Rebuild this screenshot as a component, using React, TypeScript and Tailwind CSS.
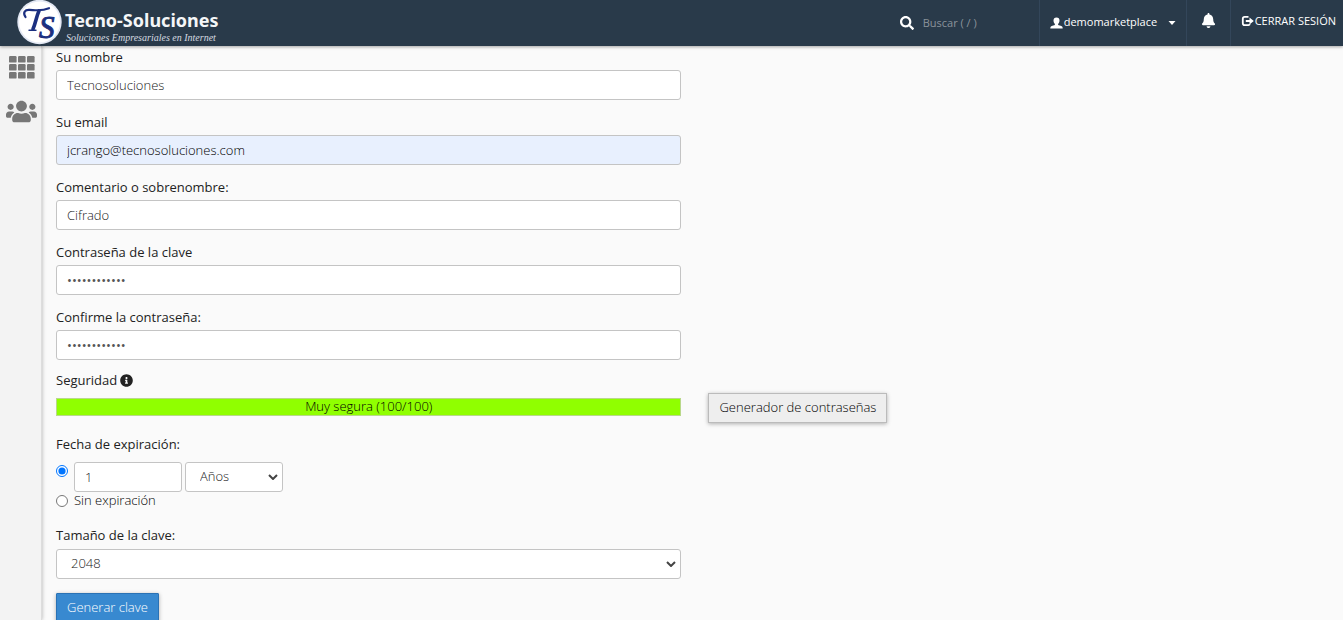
import React from "react";
import { FaBell, FaInfoCircle, FaSearch, FaUsers } from "react-icons/fa";

const control =
  "block h-[30px] w-full rounded-[3px] border border-[#c4c4c4] bg-white px-[10px] text-[13px] outline-none";

function Logo() {
  return (
    <a href="#" aria-label="Tecno-Soluciones" className="ml-[17px] flex items-center gap-[2px]">
      <svg viewBox="0 0 46 46" className="h-[46px] w-[46px] shrink-0">
        <circle cx="22.500" cy="22" r="22.200" fill="#e3e8f4" />
        <circle cx="22.500" cy="22" r="20.500" fill="#fff" />
        <text
          x="22"
          y="37.500"
          fontSize="31"
          fill="#1b2f80"
          stroke="#1b2f80"
          strokeWidth="1"
          fontFamily="'Liberation Serif', serif"
          fontStyle="italic"
        >
          S
        </text>
        <g fill="none" stroke="#1b2f80" strokeLinecap="round">
          <path d="M8.500 17C5.500 12.500 8 9.500 12.500 9.800c6.500.4 12 1.700 19.500-1.600" strokeWidth="2.200" />
          <path d="M22 11c-2.500 5-3.300 12-6 18" strokeWidth="3.600" />
          <path d="M12 30.300h7" strokeWidth="1.400" />
        </g>
      </svg>
      <span className="flex flex-col pt-2">
        <span className="font-['Noto_Sans',sans-serif] text-[18px] leading-[22px] font-bold text-[#f4f6f8]">
          Tecno-Soluciones
        </span>
        <span className="pl-px font-['Liberation_Serif',serif] text-[10px] leading-[14px] text-[#d5dae0] italic">
          Soluciones Empresariales en Internet
        </span>
      </span>
    </a>
  );
}

function Header() {
  return (
    <header className="relative z-10 flex h-[46px] items-stretch bg-[#293a4a] text-[11px] font-normal text-white shadow-[0_1px_3px_rgba(0,0,0,0.35)]">
      <Logo />
      <label className="ml-auto flex w-[139px] items-center gap-[9px]">
        <FaSearch size={14} className="shrink-0" />
        <input
          type="search"
          aria-label="Buscar"
          placeholder="Buscar ( / )"
          className="w-full min-w-0 bg-transparent outline-none placeholder:text-[#8b939b]"
        />
      </label>
      <button type="button" className="flex w-[147px] items-center border-l border-[#33465a] pl-[10px]">
        <svg viewBox="0 0 13 12" className="h-3 w-[13px]" fill="currentColor">
          <path d="M6.500 0.500C8.500 0.500 9.500 1.700 9.500 3.600c0 1.500-.6 2.700-1.400 3.400v.8c0 .6 3.300 1 4 1.700.4.400.6 1 .6 2H0.300c0-1 .2-1.600.6-2 .7-.7 4-1.100 4-1.700V7C4.100 6.300 3.500 5.100 3.500 3.600 3.500 1.700 4.500 0.500 6.500 0.500z" />
        </svg>
        <span className="ml-px pb-px">demomarketplace</span>
        <svg viewBox="0 0 8 4" className="ml-[11px] h-1 w-2" fill="currentColor">
          <path d="M0.500 0h7L4 4z" />
        </svg>
      </button>
      <button type="button" aria-label="Notificaciones" className="flex w-11 items-center justify-center border-l border-[#33465a] pb-[5px]">
        <FaBell size={15} />
      </button>
      <a href="#" className="flex items-center border-l border-[#33465a] pr-[7px] pb-1 pl-[10px] whitespace-nowrap">
        <svg viewBox="0 0 13 12" className="mr-px h-3 w-[13px]">
          <path
            d="M7.500 1.900H3.700A1.900 1.900 0 0 0 1.800 3.800v4.400a1.900 1.900 0 0 0 1.900 1.900h3.800a1.600 1.600 0 0 0 1.400-.9"
            fill="none"
            stroke="currentColor"
            strokeWidth="1.800"
          />
          <path d="M4.800 4.900h3.700V2.400L12.800 6 8.500 9.600V7.100H4.800z" fill="currentColor" />
        </svg>
        CERRAR SESIÓN
      </a>
    </header>
  );
}

function Sidebar() {
  return (
    <nav className="flex w-[42px] shrink-0 flex-col items-center gap-[17px] border-r border-[#ddd] bg-[#f3f3f3] pt-[10px] pl-[2px] text-[#777] shadow-[0_0_4px_rgba(0,0,0,0.3)]">
      <a href="#" aria-label="Aplicaciones">
        <svg viewBox="0 0 26 23" className="h-[23px] w-[26px]" fill="currentColor">
          {[0, 9, 18].map((x) =>
            [0, 8, 16].map((y) => <rect key={`${x}-${y}`} x={x} y={y} width="7.600" height="6.600" rx="1.200" />)
          )}
        </svg>
      </a>
      <a href="#" aria-label="Usuarios">
        <FaUsers size={31} />
      </a>
    </nav>
  );
}

function Field({ id, label, type = "text", value, tone = "text-[#222]" }: { id: string; label: string; type?: string; value: string; tone?: string }) {
  return (
    <div>
      <label htmlFor={id} className="mb-[5px] block leading-4 font-normal text-[#222]">
        {label}
      </label>
      <input id={id} type={type} defaultValue={value} className={`${control} ${tone}`} />
    </div>
  );
}

function Chevron() {
  return (
    <svg viewBox="0 0 10 6" className="pointer-events-none absolute top-3 right-[5px] h-[6px] w-[10px]">
      <path d="M1 1l4 4 4-4" fill="none" stroke="#444" strokeWidth="2" />
    </svg>
  );
}

export default function App() {
  return (
    <div className="flex h-screen flex-col overflow-hidden bg-[#fafafa] font-['Open_Sans',sans-serif] text-[13px] font-light text-black">
      <Header />
      <div className="flex min-h-0 flex-1">
        <Sidebar />
        <main className="flex-1 pt-[3px] pl-[14px]">
          <form className="grid grid-cols-[48.6%_1fr] gap-x-[27px]">
            <div className="col-start-1 mb-3 flex flex-col gap-[14px]">
              <Field id="nombre" label="Su nombre" value="Tecnosoluciones" />
              <Field id="email" label="Su email" type="email" value="jcrango@tecnosoluciones.com" tone="!bg-[#e8f0fe] text-black" />
              <Field id="comentario" label="Comentario o sobrenombre:" value="Cifrado" />
              <Field id="clave" label="Contraseña de la clave" type="password" value="abcdefghijkl" tone="font-normal text-[#555]" />
              <Field id="confirmar" label="Confirme la contraseña:" type="password" value="abcdefghijkl" tone="font-normal text-[#555]" />
            </div>
            <div className="col-start-1">
              <p className="mb-[10px] flex items-center gap-[3px] leading-4 font-normal text-[#222]">
                Seguridad <FaInfoCircle size={13} />
              </p>
              <div role="meter" aria-label="Seguridad" aria-valuenow={100} aria-valuemin={0} aria-valuemax={100} className="h-[18px] border border-[#b9d88a] bg-[#90ff00] text-center leading-[14px]">
                Muy segura (100/100)
              </div>
            </div>
            <div className="flex items-end">
              <button type="button" className="-mb-[7px] h-[30px] border border-[#bbb] bg-[#eee] px-[10px] shadow-[0_1px_4px_rgba(0,0,0,0.3)]">
                Generador de contraseñas
              </button>
            </div>
            <div className="col-start-1">
              <fieldset className="mt-5 mb-[19px]">
                <legend className="mb-[10px] leading-4 font-normal text-[#222]">Fecha de expiración:</legend>
                <div className="flex items-start">
                  <input type="radio" name="expira" defaultChecked aria-label="Con expiración" className="mt-[3px] mr-[6px] h-3 w-3 accent-[#0075ff]" />
                  <input type="text" aria-label="Cantidad" defaultValue="1" className="mr-[3px] h-[30px] w-[108px] rounded-[3px] border border-[#c4c4c4] bg-white px-[10px] text-[#222]" />
                  <div className="relative w-[98px]">
                    <select aria-label="Unidad" className={`${control} appearance-none !px-[14px] text-[#222]`}>
                      <option>Años</option>
                      <option>Meses</option>
                    </select>
                    <Chevron />
                  </div>
                </div>
                <label className="flex items-start gap-[6px] leading-4">
                  <input type="radio" name="expira" className="mt-[3px] h-3 w-3" />
                  Sin expiración
                </label>
              </fieldset>
              <label htmlFor="tamano" className="mb-[6px] block leading-4 font-normal text-[#222]">
                Tamaño de la clave:
              </label>
              <div className="relative mb-[14px]">
                <select id="tamano" className={`${control} appearance-none !px-[14px] text-[#222]`}>
                  <option>2048</option>
                  <option>4096</option>
                </select>
                <Chevron />
              </div>
              <button type="submit" className="h-[30px] rounded-[1px] border border-[#2a72b5] bg-[#3889d0] px-[10px] font-light text-white shadow-[0_1px_4px_rgba(0,0,0,0.3)]">
                Generar clave
              </button>
            </div>
          </form>
        </main>
      </div>
    </div>
  );
}
